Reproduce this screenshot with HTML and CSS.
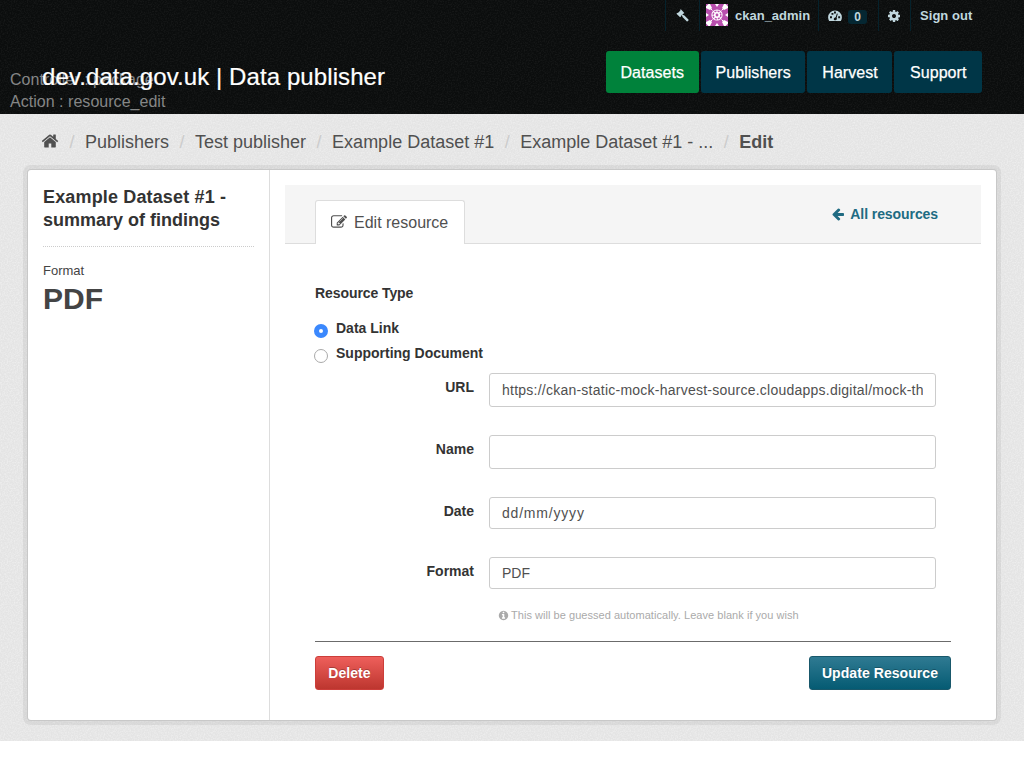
FILE: index.html
```html
<!DOCTYPE html>
<html lang="en">
<head>
<meta charset="utf-8">
<title>Edit resource</title>
<link rel="stylesheet" href="styles.css">
</head>
<body>
<header class="masthead">
  <nav class="account">
    <a class="acc gavel"><svg class="ic" viewBox="0 0 14 14"><path d="M5.2.4 9 4.200 8 5.200 7.700 5 6.800 5.900 8 6.800 8.500 6.500 13.400 11.200Q13.900 11.800 13.400 12.300L12.500 13.200Q12 13.600 11.500 13.200L6.700 8.400 7 7.900 6 6.700 5.100 7.600 5.400 8 4.400 9 .5 5.100 1.500 4.100 2 4.400 4.800 1.700 4.400 1.200Z"/></svg></a>
    <a class="acc user"><svg class="avatar" viewBox="0 0 22 22"><rect width="22" height="22" rx="2" fill="#fff"/><path fill="#b94fae" d="M4 0h5l2 3 2-3h5l-2 4 2 2 4-2v5l-3 2 3 2v5l-4-2-2 2 2 4h-5l-2-3-2 3H4l2-4-2-2-4 2v-5l3-2-3-2V4l4 2 2-2z"/><g fill="#b94fae"><path d="M0 0h2.500L0 2.500zM22 0v2.500L19.500 0zM0 22v-2.500L2.500 22zM22 22h-2.500l2.500-2.500z"/></g><circle cx="11" cy="11" r="5.600" fill="#fff"/><circle cx="11" cy="11" r="3.900" fill="none" stroke="#b94fae" stroke-width="1.500" stroke-dasharray="2.100 .963"/><circle cx="11" cy="11" r="1.400" fill="#b94fae"/><path stroke="#fff" stroke-width="1" d="M3.500 3.500l3 3M18.500 3.500l-3 3M3.500 18.500l3-3M18.500 18.500l-3-3"/></svg><span>ckan_admin</span></a>
    <a class="acc dash"><svg class="ic" viewBox="0 0 14 14"><path fill-rule="evenodd" d="M7 1.500A6.900 6.900 0 0 0 .1 8.300Q.1 10.300 1.200 12H12.800Q13.900 10.300 13.900 8.300A6.900 6.900 0 0 0 7 1.500ZM2 7.300h1.900v1.900H2ZM3.500 3.900h1.900v1.900H3.500ZM6 2.600h1.900v1.900H6ZM10.200 7.300h1.900v1.900h-1.900ZM8.900 4.400l.9.300-1.200 4Q9.500 10 8.200 11 6.700 11.700 5.800 10.400 5.500 8.900 7 8.400L7.700 8.300Z"/></svg><b>0</b></a>
    <a class="acc cog"><svg class="ic" viewBox="0 0 1792 1792"><path d="M1152 896q0-106-75-181t-181-75-181 75-75 181 75 181 181 75 181-75 75-181zm512-109v222q0 12-8 23t-20 13l-185 28q-19 54-39 91 35 50 107 138 10 12 10 25t-9 23q-27 37-99 108t-94 71q-12 0-26-9l-138-108q-44 23-91 38-16 136-29 186-7 28-36 28h-222q-14 0-24.500-8.500t-11.500-21.500l-28-184q-49-16-90-37l-141 107q-10 9-25 9-14 0-25-11-126-114-165-168-7-10-7-23 0-12 8-23 15-21 51-66.500t54-70.500q-27-50-41-99l-183-27q-13-2-21-12.500t-8-23.500v-222q0-12 8-23t19-13l186-28q14-46 39-92-40-57-107-138-10-12-10-24 0-10 9-23 26-36 98.500-107.500t94.500-71.500q13 0 26 10l138 107q44-23 91-38 16-136 29-186 7-28 36-28h222q14 0 24.500 8.500t11.500 21.500l28 184q49 16 90 37l142-107q9-9 24-9 13 0 25 10 129 119 165 170 7 8 7 22 0 12-8 23-15 21-51 66.500t-54 70.500q26 50 41 98l183 28q13 2 21 12.500t8 23.500z"/></svg></a>
    <a class="acc out"><span>Sign out</span></a>
  </nav>
  <div class="bar">
    <h1 class="brand">dev.data.gov.uk | Data publisher</h1>
    <nav class="nav"><a class="on">Datasets</a><a>Publishers</a><a>Harvest</a><a>Support</a></nav>
  </div>
  <div class="debug">Controller : package<br>Action : resource_edit</div>
</header>
<main class="page">
  <nav class="crumbs">
    <svg class="home" viewBox="0 0 1792 1792"><path d="M1472 992v480q0 26-19 45t-45 19h-384v-384h-256v384h-384q-26 0-45-19t-19-45v-480q0-1 .5-3t.5-3l575-474 575 474q1 2 1 6zm223-69l-62 74q-8 9-21 11h-3q-13 0-21-7l-692-577-692 577q-12 8-24 7-13-2-21-11l-62-74q-8-10-7-23.500t11-21.500l719-599q32-26 76-26t76 26l244 204v-195q0-14 9-23t23-9h192q14 0 23 9t9 23v408l219 182q10 8 11 21.500t-7 23.500z"/></svg>
    <i>/</i><a>Publishers</a><i>/</i><a>Test publisher</a><i>/</i><a>Example Dataset #1</a><i>/</i><a>Example Dataset #1 - ...</a><i>/</i><b>Edit</b>
  </nav>
  <div class="card">
    <aside class="side">
      <h2>Example Dataset #1 - summary of findings</h2>
      <div class="fmt">Format</div>
      <div class="fmtval">PDF</div>
    </aside>
    <section class="main">
      <div class="tabs">
        <div class="tab"><svg viewBox="0 0 1792 1792"><path d="M888 1184l116-116-152-152-116 116v56h96v96h56zm440-720q-16-16-33 1l-350 350q-17 17-1 33t33-1l350-350q17-17 1-33zm80 594v190q0 119-84.500 203.500t-203.500 84.500h-832q-119 0-203.500-84.500t-84.500-203.500v-832q0-119 84.500-203.500t203.500-84.500h832q63 0 117 25 15 7 18 23 3 17-9 29l-49 49q-14 14-32 8-23-6-45-6h-832q-66 0-113 47t-47 113v832q0 66 47 113t113 47h832q66 0 113-47t47-113v-126q0-13 9-22l64-64q15-15 35-7t20 29zm-96-738l288 288-672 672h-288v-288zm444 132l-92 92-288-288 92-92q28-28 68-28t68 28l152 152q28 28 28 68t-28 68z"/></svg><span>Edit resource</span></div>
        <a class="all"><svg viewBox="0 0 1792 1792"><path d="M1664 896v128q0 53-32.500 90.500t-84.500 37.500h-704l293 294q38 36 38 90t-38 90l-75 76q-37 37-90 37-52 0-91-37l-651-652q-37-37-37-90 0-52 37-91l651-650q38-38 91-38 52 0 90 38l75 74q38 38 38 91t-38 91l-293 293h704q52 0 84.500 37.500t32.500 90.500z"/></svg><span>All resources</span></a>
      </div>
      <form class="form">
        <div class="legend"><span>Resource Type</span></div>
        <div class="radio"><i class="dot sel"></i><span>Data Link</span></div>
        <div class="radio"><i class="dot"></i><span>Supporting Document</span></div>
        <div class="row"><label>URL</label><div class="input url"><span>https://ckan-static-mock-harvest-source.cloudapps.digital/mock-th</span></div></div>
        <div class="row"><label>Name</label><div class="input"></div></div>
        <div class="row short"><label>Date</label><div class="input date"><span>dd/mm/yyyy</span></div></div>
        <div class="row short last"><label>Format</label><div class="input"><span>PDF</span></div></div>
        <div class="hint"><svg viewBox="0 0 1792 1792"><path d="M1152 1376v-160q0-14-9-23t-23-9h-96v-512q0-14-9-23t-23-9h-320q-14 0-23 9t-9 23v160q0 14 9 23t23 9h96v320h-96q-14 0-23 9t-9 23v160q0 14 9 23t23 9h448q14 0 23-9t9-23zm-128-896v-160q0-14-9-23t-23-9h-192q-14 0-23 9t-9 23v160q0 14 9 23t23 9h192q14 0 23-9t9-23zm640 416q0 209-103 385.500t-279.500 279.500-385.500 103-385.500-103-279.500-279.500-103-385.500 103-385.500 279.500-279.500 385.500-103 385.500 103 279.500 279.500 103 385.500z"/></svg><span>This will be guessed automatically. Leave blank if you wish</span></div>
        <div class="actions"><button type="button" class="btn del">Delete</button><button type="button" class="btn upd">Update Resource</button></div>
      </form>
    </section>
  </div>
</main>
</body>
</html>
```
FILE: styles.css
```css
* { box-sizing: border-box; }
body { margin: 0; background: #fff; color: #444; font: 14px/20px "Liberation Sans", Arial, sans-serif; }
svg { fill: currentColor; flex: none; display: block; }
.masthead {
  position: relative; height: 114px; overflow: hidden; background-color: #0b0d0d;
  background-image: url("data:image/svg+xml,%3Csvg xmlns='http://www.w3.org/2000/svg' width='100' height='100'%3E%3Cfilter id='n'%3E%3CfeTurbulence type='fractalNoise' baseFrequency='.7' numOctaves='2' stitchTiles='stitch'/%3E%3CfeColorMatrix values='0 0 0 0 1 0 0 0 0 1 0 0 0 0 1 .12 0 0 0 -.05'/%3E%3C/filter%3E%3Crect width='100' height='100' filter='url(%23n)'/%3E%3C/svg%3E");
}
.account { display: flex; height: 31px; padding-left: 665px; color: #c0d7de; font-size: 13px; font-weight: bold; }
.acc { display: flex; align-items: center; border-left: 1px solid #05222c; height: 31px; }
.acc .ic { width: 13px; height: 13px; }
.gavel { width: 34px; padding-left: 10px; }
.user { width: 119px; padding-left: 6px; gap: 7px; padding-bottom: 1px; }
.user svg { width: 22px; height: 22px; }
.user span { padding-top: 1px; }
.dash { width: 60px; padding-left: 9px; gap: 6px; }
.dash b { width: 19px; height: 14px; margin-top: 3px; border-radius: 3px; background: #052732; font-size: 12px; line-height: 14px; text-align: center; }
.dash .ic { width: 14px; height: 14px; margin-top: 1px; }
.cog { width: 32px; padding-left: 8px; }
.cog .ic { width: 14px; height: 14px; }
.out { padding-left: 9px; letter-spacing: .05px; }
.bar { display: flex; justify-content: space-between; padding: 20px 42px 0 43px; }
.brand { margin: 11px 0 0 -1px; font-size: 24px; line-height: 30px; font-weight: normal; letter-spacing: .09px; color: #fff; position: relative; z-index: 1; white-space: nowrap; -webkit-text-stroke: .2px #fff; }
.nav { display: flex; gap: 2px; }
.nav a { height: 42px; padding: 0 14.8px; border-radius: 3px; background: #003647; color: #fff; font-size: 16px; letter-spacing: .04px; line-height: 43px; -webkit-text-stroke: .25px #fff; }
.nav a:last-child { padding: 0 15.6px; }
.nav a.on { background: #00823b; }
.debug { position: absolute; left: 10px; top: 69px; color: #858686; font-size: 16px; letter-spacing: .03px; line-height: 22px; }
.page {
  height: 627px; padding: 18px 28px 0; background-color: #e4e4e4;
  background-image: url("data:image/svg+xml,%3Csvg xmlns='http://www.w3.org/2000/svg' width='100' height='100'%3E%3Cfilter id='n'%3E%3CfeTurbulence type='fractalNoise' baseFrequency='.7' numOctaves='2' stitchTiles='stitch'/%3E%3CfeColorMatrix values='0 0 0 0 1 0 0 0 0 1 0 0 0 0 1 .8 0 0 0 -.3'/%3E%3C/filter%3E%3Crect width='100' height='100' filter='url(%23n)'/%3E%3C/svg%3E");
}
.crumbs { display: flex; height: 20px; padding-left: 14px; color: #505050; font-size: 18px; line-height: 20px; white-space: nowrap; }
.crumbs i { width: 26px; text-align: center; font-style: normal; color: #ccc; }
.home { width: 18px; height: 18px; margin: 0 0 0 -1px; }
.card { display: flex; height: 550px; margin-top: 18px; background: #fff; border-radius: 3px; box-shadow: 0 0 0 1px #c8c8c8, 0 0 0 5px rgba(0,0,0,.055); }
.side { flex: none; width: 242px; padding: 16px 15px; border-right: 1px solid #ddd; }
.side h2 { margin: 0 0 14px; padding-bottom: 14px; border-bottom: 1px dotted #ccc; color: #333; font-size: 18px; line-height: 23px; }
.side h2::first-line { letter-spacing: .15px; }
.fmt { font-size: 13px; line-height: 20px; }
.fmtval { font-size: 30px; font-weight: bold; line-height: 35px; }
.main { flex: 1; min-width: 0; padding: 15px 15px 0; }
.tabs { display: flex; justify-content: space-between; height: 59px; padding: 15px 43px 0 30px; background: #f5f5f5; border-bottom: 1px solid #ddd; }
.tab { display: flex; gap: 7px; width: 150px; height: 44px; padding: 13px 0 0 15px; background: #fff; border: 1px solid #ddd; border-bottom: 0; border-radius: 3px 3px 0 0; color: #505050; font-size: 16px; line-height: 17px; white-space: nowrap; }
.tab svg { width: 16px; height: 16px; }
.all { display: flex; gap: 5px; padding-top: 4px; color: #206b82; font-weight: bold; letter-spacing: -.08px; }
.all svg { width: 14px; height: 14px; margin-top: 3px; }
.form { padding: 39px 30px 0; color: #333; }
.legend { height: 35px; font-weight: bold; letter-spacing: -.08px; }
.radio { display: flex; gap: 8px; height: 25px; margin-left: -1px; font-weight: bold; }
.dot { width: 14px; height: 14px; margin-top: 6px; border: 1px solid #aaa; border-radius: 50%; background: #fff; }
.dot.sel { border: 5px solid #3b88fd; }
.row { display: flex; gap: 15px; height: 34px; margin: 5px 15px 28px 0; }
.row + .row { margin-top: 0; }
.row.short { height: 32px; }
.row.last { margin-bottom: 16px; }
.row label { width: 159px; padding-top: 4px; font-weight: bold; text-align: right; }
.input { flex: 1; min-width: 0; padding: 0 12px; overflow: hidden; white-space: nowrap; border: 1px solid #ccc; border-radius: 3px; background: #fff; color: #505050; line-height: 32px; }
.short .input { line-height: 30px; }
.input span { display: block; overflow: hidden; }
.url span { letter-spacing: .24px; }
.date span { letter-spacing: .8px; }
.hint { display: flex; gap: 2px; height: 36px; padding-left: 183px; color: #aaa; font-size: 11px; letter-spacing: .04px; line-height: 20px; }
.hint svg { width: 11px; height: 11px; margin-top: 5px; }
.actions { display: flex; justify-content: space-between; padding-top: 14px; border-top: 1px solid #6b6b6b; }
.btn { height: 34px; padding: 0; border: 1px solid; border-radius: 3px; color: #fff; font: bold 14px/32px "Liberation Sans", Arial, sans-serif; letter-spacing: .07px; text-shadow: 0 -1px 0 rgba(0,0,0,.25); }
.del { width: 69px; border-color: #cc3e3a; background: linear-gradient(#ee5f5b, #bd362f); }
.upd { width: 142px; border-color: #19586b; background: linear-gradient(#2f7a92, #055b73); }
```
